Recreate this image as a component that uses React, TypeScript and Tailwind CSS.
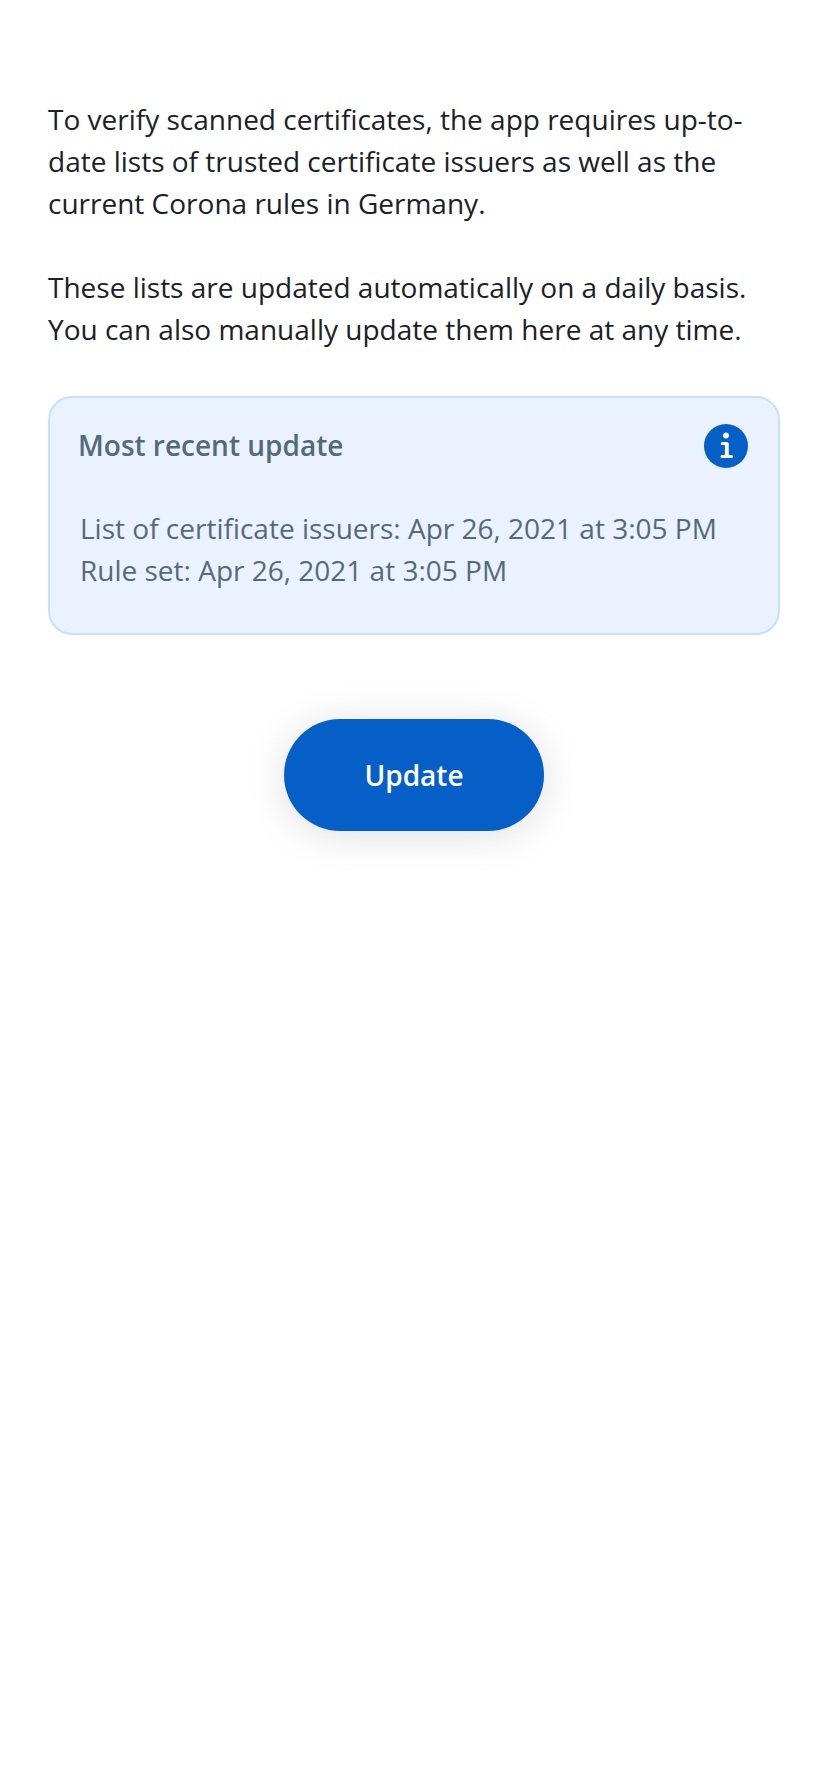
export default function App() {
  return (
    <main className="min-h-[1792px] w-full bg-white px-12 pt-[98px] font-['Open_Sans',sans-serif] text-[28px] leading-[42px] text-[#1b2127]">
      <p>
        To verify scanned certificates, the app requires up-to-
        <br />
        date lists of trusted certificate issuers as well as the
        <br />
        current Corona rules in Germany.
      </p>
      <p className="mt-[42px]">
        These lists are updated automatically on a daily basis.
        <br />
        You can also manually update them here at any time.
      </p>
      <section className="mt-[46px] h-[239px] rounded-[24px] border-2 border-[#c8e0ff] bg-[#eaf2ff] pt-[26px] pr-[30px] pl-[30px] text-[#546a79]">
        <div className="flex items-center justify-between">
          <h2 className="-ml-[2px] pb-[2px] font-semibold">Most recent update</h2>
          <svg viewBox="0 0 44 44" className="h-11 w-11" aria-hidden="true">
            <circle cx="22" cy="22" r="22" fill="#055fc6" />
            <circle cx="22" cy="11.5" r="2.9" fill="white" />
            <path
              d="M18.2 19.4H23V32.5M18 32.5H27.5"
              fill="none"
              stroke="white"
              strokeWidth="3"
              strokeLinecap="round"
              strokeLinejoin="round"
            />
            <path d="M20.9 19H24.5V32H20.9Z" fill="white" />
          </svg>
        </div>
        <p className="mt-[39px]">
          List of certificate issuers: Apr 26, 2021 at 3:05 PM
          <br />
          Rule set: Apr 26, 2021 at 3:05 PM
        </p>
      </section>
      <button className="mx-auto mt-[84px] block h-28 w-[260px] rounded-full bg-[#055fc6] font-semibold text-white shadow-[0_4px_40px_rgba(0,0,0,0.13)]">
        Update
      </button>
    </main>
  );
}
